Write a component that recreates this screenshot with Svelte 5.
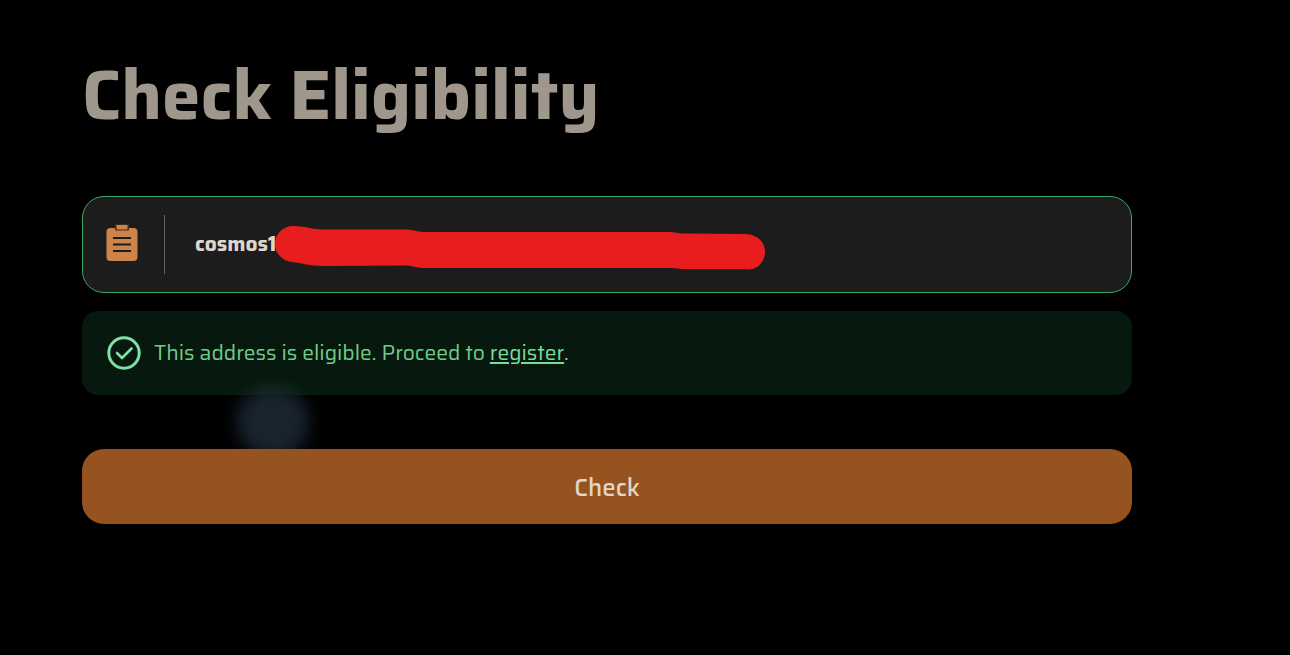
<script>
  let address = $state('cosmos1');
  let eligible = $state(true);

  function check(event) {
    event.preventDefault();
    eligible = address.trim().startsWith('cosmos1');
  }
</script>

<main>
  <h1>Check Eligibility</h1>

  <form onsubmit={check}>
    <span class="glow" aria-hidden="true"></span>

    <div class="field">
      <label for="address" aria-label="Address">
        <svg width="32" height="38" viewBox="0 0 32 38" aria-hidden="true">
          <rect x="0.5" y="4" width="31" height="33" rx="4" fill="#cd8349" />
          <rect x="9" y="-1" width="14" height="7.500" rx="1" fill="#3b2c21" />
          <rect x="10.5" y="1" width="11" height="4.500" fill="#cd8349" />
          <path d="M7 14h18M7 20.500h18M7 27h18" stroke="#1c1c1c" stroke-width="2" />
        </svg>
      </label>
      <input id="address" type="text" bind:value={address} spellcheck="false" autocomplete="off" />
      <svg class="redaction" width="492" height="48" viewBox="0 0 492 48" aria-hidden="true">
        <path
          d="M19 2C9 2 1 10 1 20s8 17 17 18c10 1 18 4 31 4l83-.5c7 0 9 2.500 18 2.500h244c7 0 9 1 16 1l60 0 5 .5c9 0 16-8 16-18s-9-17.500-20-17.500l-60-.5c-7 0-9-1.500-17-1.500H151c-8 0-11-2.500-20-2.500H50C38 5.500 31 2 19 2Z"
          fill="#e81e1e"
        />
      </svg>
    </div>

    {#if eligible}
      <p class="message" role="status">
        <svg width="34" height="34" viewBox="0 0 34 34" fill="none" stroke="#82dfa6" stroke-width="3" aria-hidden="true">
          <circle cx="17" cy="17" r="15.200" />
          <path d="M10 17l5 5 9.500-9.500" stroke-linecap="round" stroke-linejoin="round" stroke-width="2.600" />
        </svg>
        <span>This address is eligible. Proceed to <a href="#register">register</a>.</span>
      </p>
    {/if}

    <button type="submit">Check</button>
  </form>
</main>

<style>
  :global(body) {
    margin: 0;
    background: #000;
  }

  main {
    padding: 55px 158px 55px 82px;
    font-family: Saira, "Exo 2", Roboto, "Liberation Sans", sans-serif;
  }

  h1 {
    margin: 0 0 61px;
    color: #a0978c;
    font-size: 69px;
    font-weight: 700;
    line-height: 80px;
  }

  form {
    position: relative;
    display: flex;
    flex-direction: column;
  }

  .glow {
    position: absolute;
    top: 190px;
    left: 155px;
    width: 72px;
    height: 72px;
    border-radius: 50%;
    background: radial-gradient(circle, #1a242d 20%, #142131 100%);
    filter: blur(8px);
  }

  .field {
    position: relative;
    display: flex;
    align-items: center;
    padding: 18px 23px;
    border: 1px solid #36a96a;
    border-radius: 22px;
    background: #1c1c1c;
  }

  label {
    display: flex;
    align-items: center;
    height: 59px;
    padding-right: 26px;
    border-right: 1px solid #6b6259;
    box-sizing: border-box;
  }

  label svg {
    margin-bottom: 4px;
  }

  input {
    flex: 1;
    min-width: 0;
    padding: 0 0 2px 30px;
    border: 0;
    outline: 0;
    background: transparent;
    color: #ddd6cb;
    font: inherit;
    font-size: 21px;
    font-weight: 700;
    line-height: 32px;
  }

  .redaction {
    position: absolute;
    top: 27px;
    left: 191px;
    pointer-events: none;
  }

  .message {
    position: relative;
    display: flex;
    align-items: center;
    gap: 13px;
    margin: 18px 0 0;
    padding: 25px;
    border-radius: 16px;
    background: rgba(17, 58, 33, 0.42);
    color: #72cb8a;
    font-size: 21px;
    line-height: 34px;
  }

  a {
    color: #78dc98;
    text-decoration: underline;
    text-decoration-thickness: 2px;
    text-underline-offset: 2px;
  }

  button {
    position: relative;
    margin-top: 54px;
    padding: 21px 20px 18px;
    border: 0;
    border-radius: 22px;
    background: #96531f;
    color: #e1d6c9;
    font: inherit;
    font-size: 24px;
    font-weight: 500;
    line-height: 36px;
    cursor: pointer;
  }
</style>
